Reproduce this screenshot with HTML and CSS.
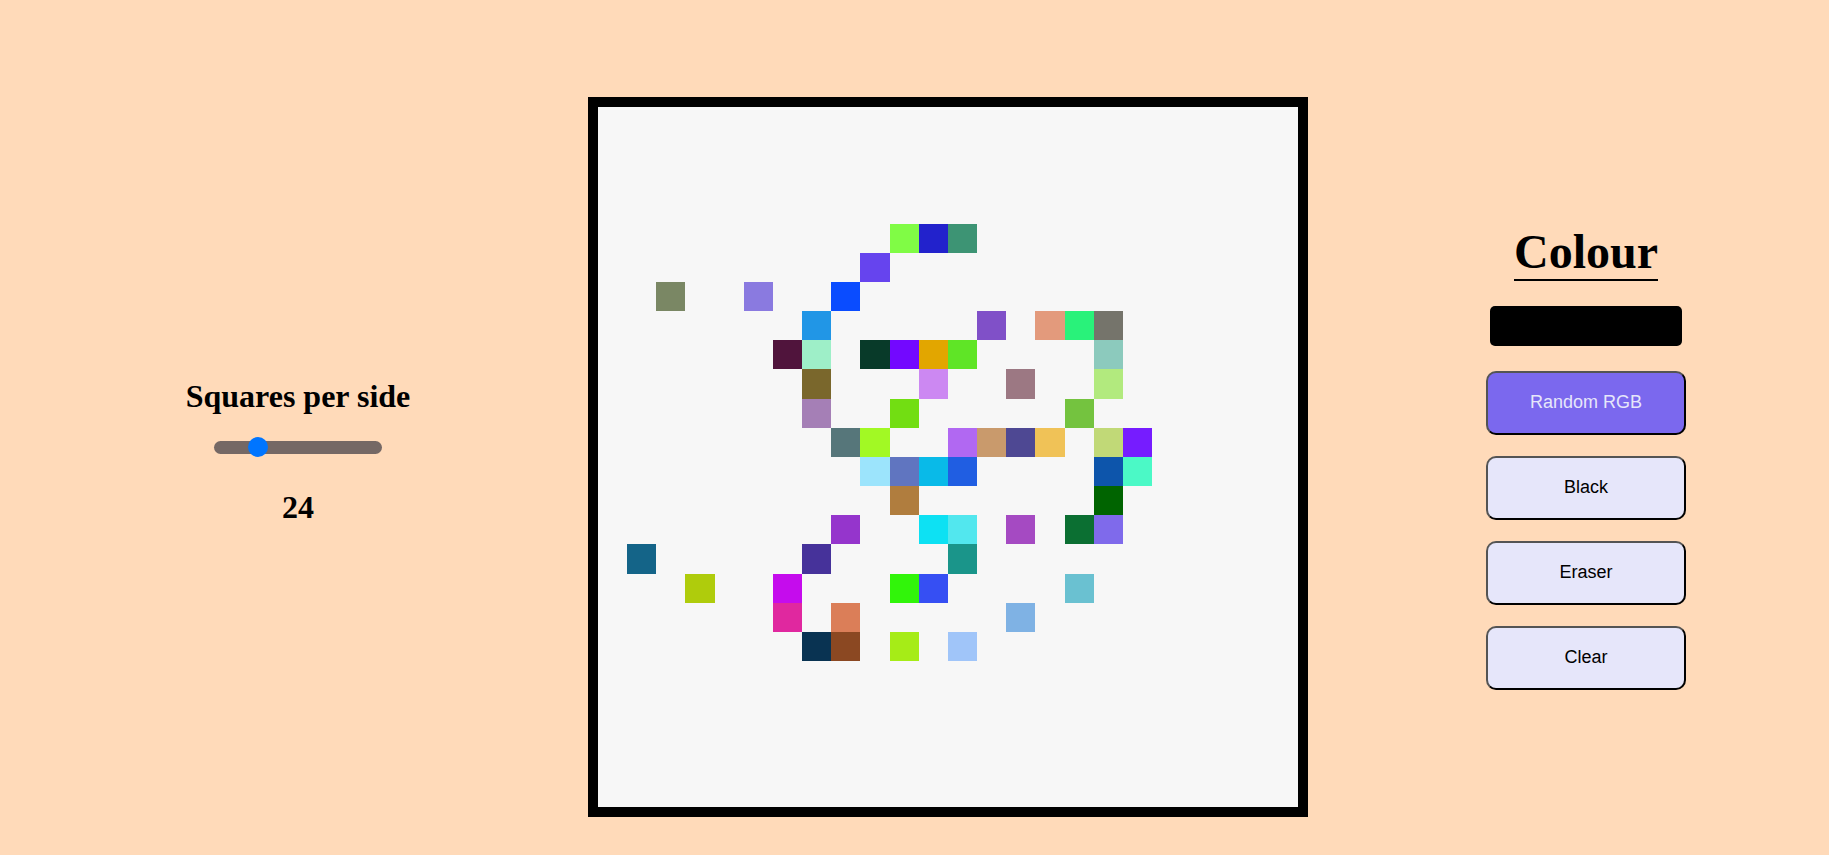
FILE: index.html
```html
<!DOCTYPE html>
<html lang="en">
<head>
    <meta charset="UTF-8">
    <meta name="viewport" content="width=device-width, initial-scale=1.0">
    <title>Etch-a-Sketch</title>
    <link rel="stylesheet" href="styles.css">
</head>
<body>
    <main class="main">
        <section class="size-panel">
            <h2 class="size-title">Squares per side</h2>
            <input type="range" id="size-slider" class="slider" min="1" max="100" value="24">
            <p class="size-value" id="size-value">24</p>
        </section>

        <div class="board" id="board"></div>

        <section class="colour-panel">
            <h1 class="colour-title">Colour</h1>
            <div class="colour-swatch" id="swatch"></div>
            <button class="mode-btn active" data-mode="random">Random RGB</button>
            <button class="mode-btn" data-mode="black">Black</button>
            <button class="mode-btn" data-mode="eraser">Eraser</button>
            <button class="mode-btn" id="clear-btn">Clear</button>
        </section>
    </main>

    <script>
        // squares already drawn in the sketch: [row, column, colour]
        const painted = [
            [4, 10, '#80fc45'], [4, 11, '#2222cc'], [4, 12, '#3d9474'],
            [5, 9, '#6644ee'],
            [6, 2, '#7a8764'], [6, 5, '#8a7ae0'], [6, 8, '#0a4cff'],
            [7, 7, '#2196e6'], [7, 13, '#8050c8'], [7, 15, '#e39a7c'], [7, 16, '#29f27a'], [7, 17, '#75746b'],
            [8, 6, '#50143c'], [8, 7, '#9eefc8'], [8, 9, '#083a29'], [8, 10, '#7308ff'], [8, 11, '#e2a600'], [8, 12, '#5fe526'], [8, 17, '#8ccabd'],
            [9, 7, '#7a672c'], [9, 11, '#cc88f2'], [9, 14, '#9c7883'], [9, 17, '#b2ea7e'],
            [10, 7, '#a57fb6'], [10, 10, '#72de12'], [10, 16, '#74c33f'],
            [11, 8, '#56767a'], [11, 9, '#a2f924'], [11, 12, '#b168f2'], [11, 13, '#c99a6c'], [11, 14, '#4e4893'], [11, 15, '#f0c257'], [11, 17, '#c1d977'], [11, 18, '#761cff'],
            [12, 9, '#9ce4fc'], [12, 10, '#6075c0'], [12, 11, '#09bae8'], [12, 12, '#205ee2'], [12, 17, '#0d55ab'], [12, 18, '#4bf9c6'],
            [13, 10, '#b07d3e'], [13, 17, '#006400'],
            [14, 8, '#9535cc'], [14, 11, '#0de1f3'], [14, 12, '#52e7ee'], [14, 14, '#a54ac2'], [14, 16, '#0b6f32'], [14, 17, '#7f6aeb'],
            [15, 1, '#146488'], [15, 7, '#46329a'], [15, 12, '#1a958a'],
            [16, 3, '#afcc0c'], [16, 6, '#c50ced'], [16, 10, '#31f50a'], [16, 11, '#364ff3'], [16, 16, '#6ac1d1'],
            [17, 6, '#e0289f'], [17, 8, '#db7e58'], [17, 14, '#7fb2e4'],
            [18, 7, '#093352'], [18, 8, '#8b4822'], [18, 10, '#a6ec17'], [18, 12, '#a0c5f9']
        ];

        const board = document.getElementById('board');
        const slider = document.getElementById('size-slider');
        const sizeValue = document.getElementById('size-value');
        let mode = 'random';

        function randomColour() {
            const c = () => Math.floor(Math.random() * 256);
            return `rgb(${c()}, ${c()}, ${c()})`;
        }

        function buildBoard(size) {
            board.innerHTML = '';
            board.style.gridTemplateColumns = `repeat(${size}, 1fr)`;
            board.style.gridTemplateRows = `repeat(${size}, 1fr)`;
            for (let i = 0; i < size * size; i++) {
                const cell = document.createElement('div');
                cell.className = 'cell';
                cell.addEventListener('mouseover', () => {
                    if (mode === 'random') cell.style.backgroundColor = randomColour();
                    else if (mode === 'black') cell.style.backgroundColor = '#000';
                    else cell.style.backgroundColor = '';
                });
                board.appendChild(cell);
            }
        }

        buildBoard(24);
        painted.forEach(([row, col, colour]) => {
            board.children[row * 24 + col].style.backgroundColor = colour;
        });

        slider.addEventListener('input', () => {
            sizeValue.textContent = slider.value;
            buildBoard(Number(slider.value));
        });

        document.querySelectorAll('[data-mode]').forEach(btn => {
            btn.addEventListener('click', () => {
                mode = btn.dataset.mode;
                document.querySelectorAll('[data-mode]').forEach(b => b.classList.remove('active'));
                btn.classList.add('active');
            });
        });

        document.getElementById('clear-btn').addEventListener('click', () => {
            buildBoard(Number(slider.value));
        });
    </script>
</body>
</html>
```

FILE: styles.css
```css
/* Page */
body {
    margin: 0;
    background-color: #ffdab9; /* peach puff */
    font-family: 'Liberation Serif', 'Times New Roman', serif;
    color: #000;
}

.main {
    display: flex;
    align-items: center;
    height: 100vh;
    box-sizing: border-box;
    padding: 59px 0 0 8px;
}

/* Left: grid size */
.size-panel {
    flex-shrink: 0;
    width: 580px;
    display: flex;
    flex-direction: column;
    align-items: center;
    padding-bottom: 11px;
}

.size-title {
    margin: 0;
    font-size: 32px;
    line-height: 1.15;
}

.slider {
    -webkit-appearance: none;
    appearance: none;
    width: 168px;
    height: 13px;
    margin: 26px 0 0;
    border-radius: 7px;
    background: #756865;
    outline: none;
}

.slider::-webkit-slider-thumb {
    -webkit-appearance: none;
    appearance: none;
    width: 20px;
    height: 20px;
    border-radius: 50%;
    background: #0075ff;
    cursor: pointer;
}

.size-value {
    margin: 35px 0 0;
    font-size: 32px;
    font-weight: bold;
    line-height: 1.15;
}

/* Middle: sketch board */
.board {
    flex-shrink: 0;
    display: grid;
    width: 700px;
    height: 700px;
    border: 10px solid #000;
    background-color: #f7f7f7;
}

.cell {
    min-width: 0;
    min-height: 0;
}

/* Right: colour modes */
.colour-panel {
    flex-shrink: 0;
    width: 200px;
    margin-left: 178px;
    padding-top: 2px;
    display: flex;
    flex-direction: column;
    align-items: center;
}

.colour-title {
    margin: 0;
    font-size: 48px;
    line-height: 1.1;
    border-bottom: 2px solid #000;
}

.colour-swatch {
    width: 192px;
    height: 40px;
    margin-top: 25px;
    border-radius: 5px;
    background-color: #000;
}

.mode-btn {
    width: 200px;
    height: 64px;
    margin-top: 21px;
    border: 2px outset #000;
    border-radius: 10px;
    background-color: #e6e6fa; /* lavender */
    color: #000;
    font-family: 'Liberation Sans', Arial, sans-serif;
    font-size: 18px;
    cursor: pointer;
}

.colour-swatch + .mode-btn {
    margin-top: 25px;
}

.mode-btn.active {
    background-color: #7b68ee; /* medium slate blue */
    color: #e6e6fa;
}
```
